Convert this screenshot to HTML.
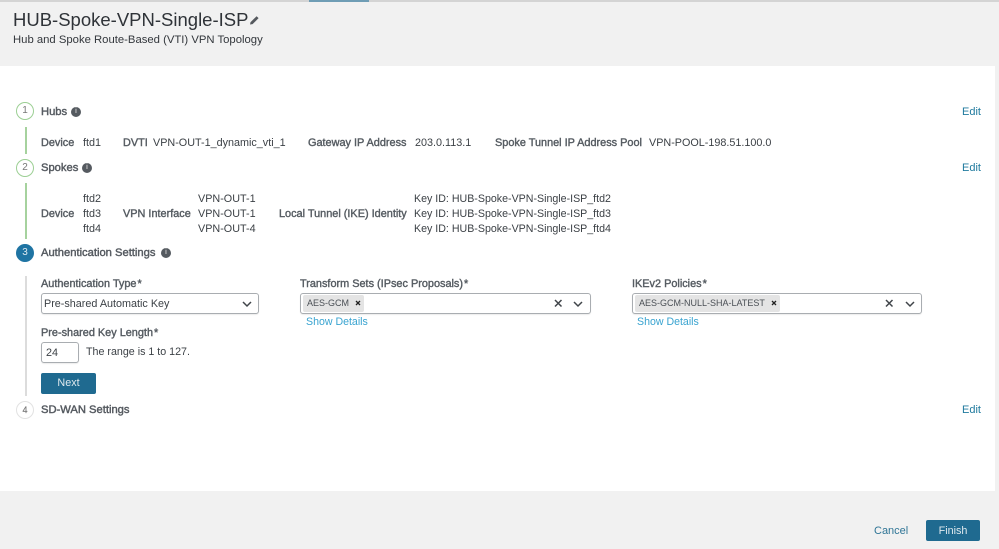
<!DOCTYPE html>
<html><head><meta charset="utf-8"><style>
html,body{margin:0;padding:0}
html{background:#f1f1f1}
body{width:999px;height:549px;position:relative;overflow:hidden;background:#f1f1f1;font-family:"Liberation Sans",sans-serif;font-size:10.8px;color:#3c4146;filter:blur(.3px)}
div{position:absolute;white-space:nowrap}
.t{line-height:14px;height:14px;margin-top:1px}
.b{color:#565c62;-webkit-text-stroke:.4px #565c62;font-size:10.9px}
.h{color:#565b61;-webkit-text-stroke:.45px #565b61;font-size:11.2px}
.e{color:#1f7a9e;font-size:11px}
.l{color:#38a3d0;font-size:10.6px}
.c{width:18px;height:18px;border-radius:50%;box-sizing:border-box;background:#fff;text-align:center;font-size:10px;line-height:16px;color:#777;border:1.5px solid #9ccf94}
.v{width:2px;background:#a6d29e}
.i{width:10px;height:10px;border-radius:50%;background:#555a60;color:#c8c8c8;font-size:7px;line-height:10px;text-align:center;font-weight:bold}
.box{box-sizing:border-box;height:21px;border:1px solid #a9adb1;border-radius:3px;background:#fff;box-shadow:0 1px 1px rgba(0,0,0,.08)}
.chip{background:#e4e4e4;height:17px;border-radius:2px}
</style></head><body>
<div style="left:0;top:0;width:999px;height:2px;background:#d4d4d4"></div>
<div style="left:309px;top:0;width:60px;height:2px;background:#6f9db5"></div>
<div style="left:13px;top:8px;font-size:18.5px;line-height:24px;color:#2f3338">HUB-Spoke-VPN-Single-ISP</div>
<svg style="position:absolute;left:249px;top:15px" width="11" height="10" viewBox="0 0 11 10"><path d="M1 9.5l.6-2.4L7.6 1.2l2 1.9-6 6z" fill="#55595e"/></svg>
<div class="t" style="left:13px;top:32px;font-size:11.3px;color:#33373c">Hub and Spoke Route-Based (VTI) VPN Topology</div>

<div style="left:0;top:66px;width:995px;height:425px;background:#fff"></div>

<div class="v" style="left:25px;top:127px;height:27px"></div>
<div class="v" style="left:25px;top:183px;height:56px"></div>
<div class="v" style="left:25px;top:276px;height:120px;background:#dcdcdc"></div>

<div class="c" style="left:16px;top:102px">1</div>
<div class="t h" style="left:41px;top:104px">Hubs</div>
<div class="i" style="left:71px;top:107px">i</div>
<div class="t e" style="left:962px;top:104px">Edit</div>

<div class="t b" style="left:41px;top:135px">Device</div>
<div class="t" style="left:83px;top:135px">ftd1</div>
<div class="t b" style="left:123px;top:135px">DVTI</div>
<div class="t" style="left:153px;top:135px">VPN-OUT-1_dynamic_vti_1</div>
<div class="t b" style="left:308px;top:135px">Gateway IP Address</div>
<div class="t" style="left:415px;top:135px">203.0.113.1</div>
<div class="t b" style="left:495px;top:135px">Spoke Tunnel IP Address Pool</div>
<div class="t" style="left:649px;top:135px">VPN-POOL-198.51.100.0</div>

<div class="c" style="left:16px;top:159px">2</div>
<div class="t h" style="left:41px;top:160px">Spokes</div>
<div class="i" style="left:82px;top:163px">i</div>
<div class="t e" style="left:962px;top:160px">Edit</div>

<div class="t" style="left:83px;top:191px">ftd2</div>
<div class="t" style="left:83px;top:206px">ftd3</div>
<div class="t" style="left:83px;top:221px">ftd4</div>
<div class="t b" style="left:41px;top:206px">Device</div>
<div class="t b" style="left:123px;top:206px">VPN Interface</div>
<div class="t" style="left:198px;top:191px">VPN-OUT-1</div>
<div class="t" style="left:198px;top:206px">VPN-OUT-1</div>
<div class="t" style="left:198px;top:221px">VPN-OUT-4</div>
<div class="t b" style="left:279px;top:206px">Local Tunnel (IKE) Identity</div>
<div class="t" style="left:414px;top:191px;font-size:10.65px">Key ID: HUB-Spoke-VPN-Single-ISP_ftd2</div>
<div class="t" style="left:414px;top:206px;font-size:10.65px">Key ID: HUB-Spoke-VPN-Single-ISP_ftd3</div>
<div class="t" style="left:414px;top:221px;font-size:10.65px">Key ID: HUB-Spoke-VPN-Single-ISP_ftd4</div>

<div class="c" style="left:16px;top:244px;background:#1f74a3;border-color:#1f74a3;color:#dfeaf0">3</div>
<div class="t h" style="left:41px;top:245px">Authentication Settings</div>
<div class="i" style="left:161px;top:248px">i</div>

<div class="t b" style="left:41px;top:276px">Authentication Type<span style="margin-left:1px">*</span></div>
<div class="box" style="left:41px;top:293px;width:218px"></div>
<div class="t" style="left:44px;top:296px;font-size:10.8px">Pre-shared Automatic Key</div>
<svg style="position:absolute;left:241px;top:299px" width="12" height="10" viewBox="0 0 12 10"><path d="M2 3l4 4 4-4" fill="none" stroke="#40454a" stroke-width="1.5"/></svg>

<div class="t b" style="left:300px;top:276px">Transform Sets (IPsec Proposals)<span style="margin-left:1px">*</span></div>
<div class="box" style="left:300px;top:293px;width:291px"></div>
<div class="chip" style="left:303px;top:295px;width:61px"></div>
<div class="t" style="left:307px;top:295px;font-size:9px;color:#4a4f55">AES-GCM</div>
<svg style="position:absolute;left:355px;top:300px" width="6" height="6" viewBox="0 0 6 6"><path d="M1 1l4 4M5 1L1 5" stroke="#222" stroke-width="1.3"/></svg>
<svg style="position:absolute;left:553px;top:298px" width="11" height="11" viewBox="0 0 11 11"><path d="M2 2l6.5 6.5M8.5 2L2 8.5" fill="none" stroke="#40454a" stroke-width="1.5"/></svg>
<svg style="position:absolute;left:572px;top:299px" width="12" height="10" viewBox="0 0 12 10"><path d="M2 3l4 4 4-4" fill="none" stroke="#40454a" stroke-width="1.5"/></svg>
<div class="t l" style="left:306px;top:314px">Show Details</div>

<div class="t b" style="left:632px;top:276px">IKEv2 Policies<span style="margin-left:1px">*</span></div>
<div class="box" style="left:632px;top:293px;width:290px"></div>
<div class="chip" style="left:635px;top:295px;width:145px"></div>
<div class="t" style="left:639px;top:295px;font-size:9px;color:#4a4f55">AES-GCM-NULL-SHA-LATEST</div>
<svg style="position:absolute;left:771px;top:300px" width="6" height="6" viewBox="0 0 6 6"><path d="M1 1l4 4M5 1L1 5" stroke="#222" stroke-width="1.3"/></svg>
<svg style="position:absolute;left:884px;top:298px" width="11" height="11" viewBox="0 0 11 11"><path d="M2 2l6.5 6.5M8.5 2L2 8.5" fill="none" stroke="#40454a" stroke-width="1.5"/></svg>
<svg style="position:absolute;left:904px;top:299px" width="12" height="10" viewBox="0 0 12 10"><path d="M2 3l4 4 4-4" fill="none" stroke="#40454a" stroke-width="1.5"/></svg>
<div class="t l" style="left:637px;top:314px">Show Details</div>

<div class="t b" style="left:41px;top:325px">Pre-shared Key Length<span style="margin-left:1px">*</span></div>
<div class="box" style="left:41px;top:342px;width:38px"></div>
<div class="t" style="left:46px;top:345px">24</div>
<div class="t" style="left:86px;top:344px;font-size:10.7px">The range is 1 to 127.</div>

<div style="left:41px;top:373px;width:55px;height:21px;background:#1f6a90;border-radius:2px;color:#dfe9ee;text-align:center;line-height:21px">Next</div>

<div class="c" style="left:16px;top:401px;border:1px solid #e2e2e2;line-height:16px;font-size:9px;-webkit-text-stroke:.2px #777">4</div>
<div class="t h" style="left:41px;top:402px">SD-WAN Settings</div>
<div class="t e" style="left:962px;top:402px">Edit</div>

<div class="t" style="left:874px;top:523px;color:#2f7596;font-size:11px">Cancel</div>
<div style="left:926px;top:520px;width:54px;height:21px;background:#1f6a90;border-radius:2px;color:#dfe9ee;text-align:center;line-height:22px">Finish</div>
</body></html>
